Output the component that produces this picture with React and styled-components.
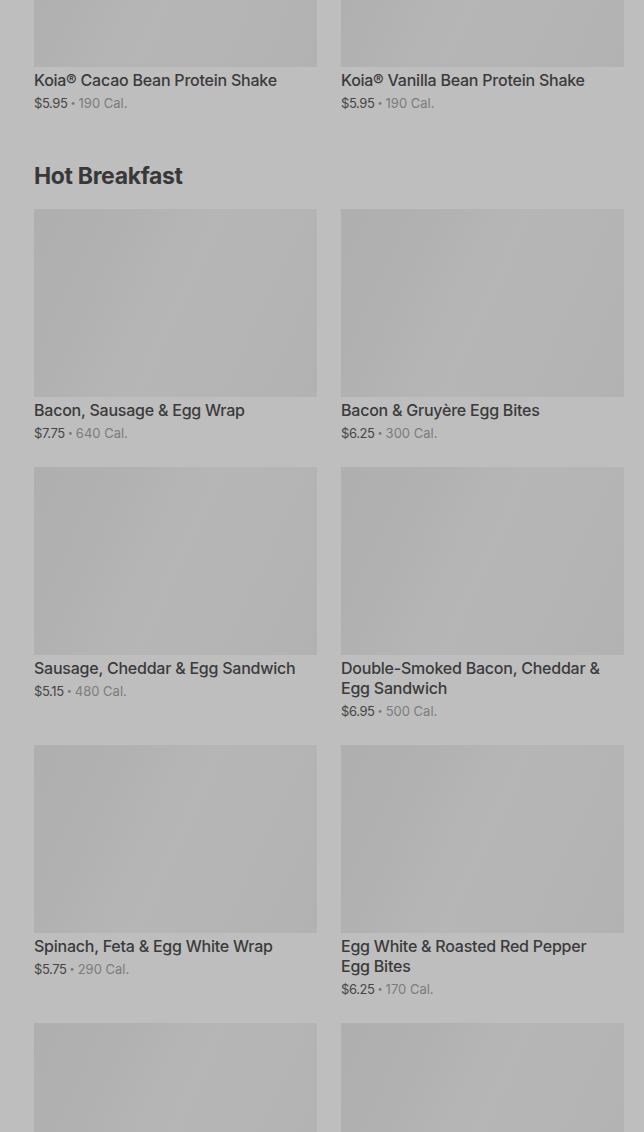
import React from 'react'
import styled, { createGlobalStyle } from 'styled-components'

const GlobalStyle = createGlobalStyle`
  html, body {
    margin: 0;
    padding: 0;
    background: #bebebe;
    overflow: hidden;
  }
  body {
    font-family: Inter, "Noto Sans", Arial, sans-serif;
    -webkit-font-smoothing: antialiased;
  }
`

const shakes = [
  { name: 'Koia® Cacao Bean Protein Shake', price: '$5.95', cal: '190 Cal.' },
  { name: 'Koia® Vanilla Bean Protein Shake', price: '$5.95', cal: '190 Cal.' }
]

const hotBreakfast = [
  { name: 'Bacon, Sausage & Egg Wrap', price: '$7.75', cal: '640 Cal.' },
  { name: 'Bacon & Gruyère Egg Bites', price: '$6.25', cal: '300 Cal.' },
  { name: 'Sausage, Cheddar & Egg Sandwich', price: '$5.15', cal: '480 Cal.' },
  { name: 'Double-Smoked Bacon, Cheddar & Egg Sandwich', price: '$6.95', cal: '500 Cal.' },
  { name: 'Spinach, Feta & Egg White Wrap', price: '$5.75', cal: '290 Cal.' },
  { name: 'Egg White & Roasted Red Pepper Egg Bites', price: '$6.25', cal: '170 Cal.' },
  { name: 'Impossible™ Breakfast Sandwich', price: '$6.95', cal: '420 Cal.' },
  { name: 'Turkey Bacon, Cheddar & Egg White Sandwich', price: '$5.45', cal: '230 Cal.' }
]

function Item ({ item }) {
  return (
    <Card>
      <Thumb />
      <ItemName>{item.name}</ItemName>
      <Meta>
        <Price>{item.price}</Price>
        <Dot>•</Dot>
        <Cal>{item.cal}</Cal>
      </Meta>
    </Card>
  )
}

export default function App () {
  return (
    <>
      <GlobalStyle />
      <Page>
        <Section>
          <Grid>
            {shakes.map(item => <Item key={item.name} item={item} />)}
          </Grid>
        </Section>
        <Section>
          <SectionTitle>Hot Breakfast</SectionTitle>
          <Grid>
            {hotBreakfast.map(item => <Item key={item.name} item={item} />)}
          </Grid>
        </Section>
      </Page>
    </>
  )
}

const Page = styled.main`
  display: flex;
  flex-direction: column;
  padding: 0 20px 0 34px;
  margin-top: -121px;
`

const Section = styled.section`
  display: flex;
  flex-direction: column;
  & + & {
    margin-top: 47px;
  }
`

const SectionTitle = styled.h2`
  margin: 0 0 17px;
  font-size: 23px;
  line-height: 32px;
  font-weight: 700;
  letter-spacing: -0.35px;
  color: #383838;
`

const Grid = styled.div`
  display: grid;
  grid-template-columns: 283px 283px;
  column-gap: 24px;
  row-gap: 24px;
  align-items: start;
`

const Card = styled.div`
  display: flex;
  flex-direction: column;
`

const Thumb = styled.div`
  height: 188px;
  background: linear-gradient(115deg, #afafaf 0%, #b1b1b1 25%, #b6b6b6 50%, #b4b4b4 75%, #b2b2b2 100%);
`

const ItemName = styled.div`
  margin-top: 3px;
  padding-right: 8px;
  font-size: 16px;
  line-height: 20px;
  font-weight: 500;
  letter-spacing: -0.23px;
  color: #3b3b3b;
`

const Meta = styled.div`
  display: flex;
  align-items: center;
  gap: 3px;
  margin-top: 3px;
  font-size: 13px;
  line-height: 20px;
`

const Price = styled.span`
  color: #464646;
  letter-spacing: -0.4px;
`

const Dot = styled.span`
  color: #7a7a7a;
  font-size: 9px;
`

const Cal = styled.span`
  color: #7c7c7c;
`
